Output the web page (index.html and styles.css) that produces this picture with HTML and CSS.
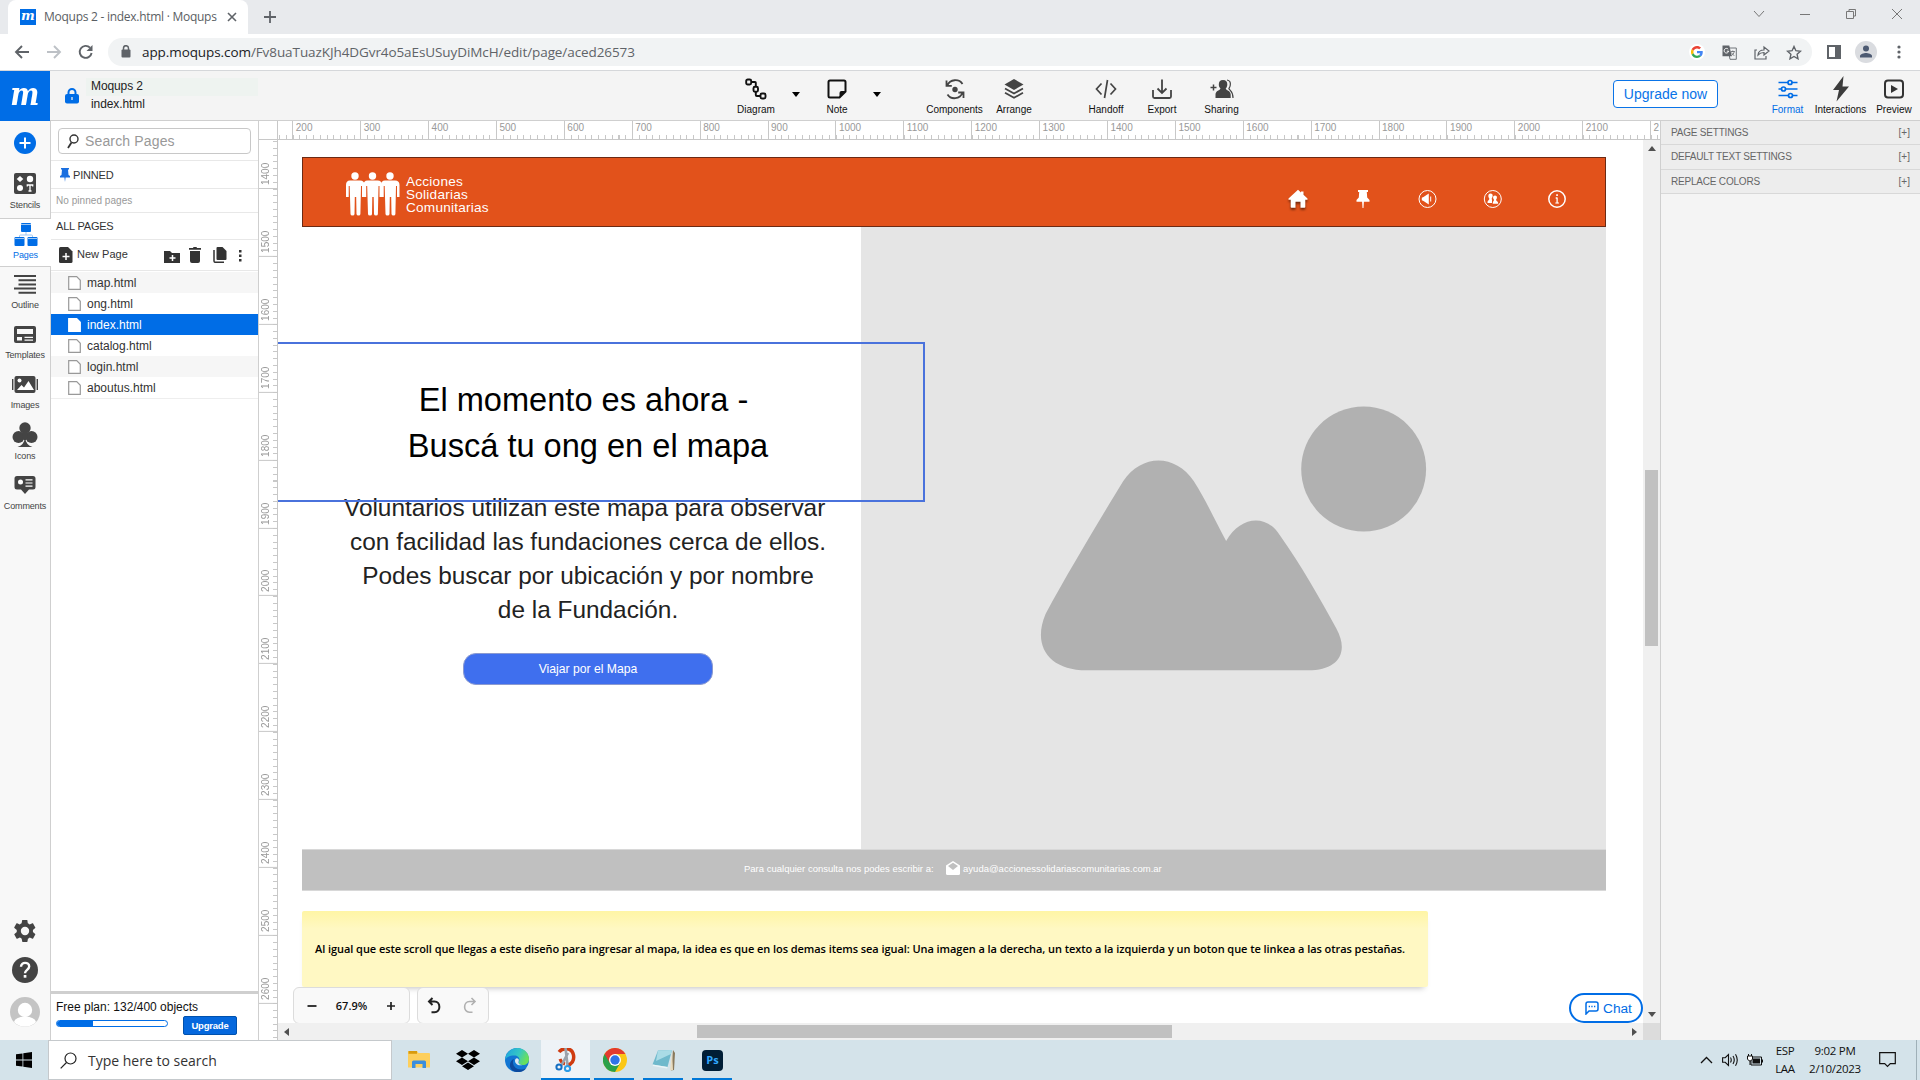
FILE: index.html
```html
<!DOCTYPE html>
<html lang="es">
<head>
<meta charset="utf-8">
<title>Moqups 2 - index.html · Moqups</title>
<link rel="stylesheet" href="styles.css">
</head>
<body>
<div class="tabstrip">
  <div class="tab">
    <span class="favicon">m</span>
    <span class="tab-title">Moqups 2 - index.html · Moqups</span>
    <svg class="tab-close" width="10" height="10" viewBox="0 0 10 10"><path d="M1 1l8 8M9 1l-8 8" stroke="#5f6368" stroke-width="1.6"/></svg>
  </div>
  <svg class="new-tab" width="14" height="14" viewBox="0 0 14 14"><path d="M7 1v12M1 7h12" stroke="#5f6368" stroke-width="1.8"/></svg>
  <div class="win-buttons">
    <svg width="12" height="12" viewBox="0 0 12 12"><path d="M1 3l5 5.500 5-5.500"/></svg>
    <svg width="12" height="12" viewBox="0 0 12 12"><path d="M1 6.500h10"/></svg>
    <svg width="12" height="12" viewBox="0 0 12 12"><path d="M1.500 3.500h7v7h-7zM4 3.500v-2h6.500v6.500h-2"/></svg>
    <svg width="12" height="12" viewBox="0 0 12 12"><path d="M1 1l10 10M11 1L1 11"/></svg>
  </div>
</div>
<div class="toolbar">
  <svg class="nav back" width="16" height="16" viewBox="0 0 16 16"><path d="M8 2L2 8l6 6M2 8h13" stroke="#5f6368"/></svg>
  <svg class="nav forward" width="16" height="16" viewBox="0 0 16 16"><path d="M8 2l6 6-6 6M14 8H1" stroke="#bdc1c6"/></svg>
  <svg class="nav reload" width="16" height="16" viewBox="0 0 16 16"><path d="M13.600 9A6 6 0 1 1 12 3.700" stroke="#5f6368"/><path d="M14.500 1v6h-6z" fill="#5f6368"/></svg>
  <div class="address">
    <svg class="lock" width="10" height="13" viewBox="0 0 10 13"><rect x="0.500" y="4.500" width="9" height="8" rx="1" fill="#5f6368"/><path d="M2.500 5V3.200a2.500 2.500 0 0 1 5 0V5" fill="none" stroke="#5f6368" stroke-width="1.500"/></svg>
    <span class="url"><b>app.moqups.com</b>/Fv8uaTuazKJh4DGvr4o5aEsUSuyDiMcH/edit/page/aced26573</span>
    <span class="google"><svg width="12" height="12" viewBox="0 0 48 48"><path fill="#ea4335" d="M24 9.500c3.500 0 6.700 1.200 9.200 3.600l6.900-6.900C35.900 2.400 30.500 0 24 0 14.600 0 6.500 5.400 2.600 13.200l8 6.200C12.400 13.700 17.700 9.500 24 9.500z"/><path fill="#4285f4" d="M47 24.600c0-1.600-.2-3.100-.4-4.600H24v9h12.900c-.6 3-2.300 5.500-4.800 7.200l7.700 6C44.400 38 47 31.800 47 24.600z"/><path fill="#fbbc05" d="M10.500 28.600a14.500 14.500 0 0 1 0-9.200l-8-6.200a24 24 0 0 0 0 21.600z"/><path fill="#34a853" d="M24 48c6.500 0 11.900-2.100 15.900-5.800l-7.700-6c-2.200 1.500-4.900 2.300-8.200 2.300-6.300 0-11.600-4.200-13.500-9.900l-8 6.200C6.500 42.600 14.600 48 24 48z"/></svg></span>
    <svg class="translate" width="15" height="15" viewBox="0 0 15 15"><path d="M6 3h8.300v11.300H8z" fill="#f1f3f4" stroke="#70757a"/><path d="M0.500 0.500h6.800l2.500 10.700H.5z" fill="#5f6368"/><path d="M6.200 4.200a2.300 2.300 0 1 0 .5 2H4.800" stroke="#fff" fill="none"/><path d="M8.800 6.500h4M10.800 5.500v1M12.200 6.500c-.3 2-1.400 3.300-2.800 4M9.600 7.500c.5 1.500 1.500 2.500 2.800 3" stroke="#5f6368" fill="none" stroke-width=".8"/></svg>
    <svg class="share" width="16" height="15" viewBox="0 0 16 15"><path d="M3 5H1v9h11v-3M4 10c.3-3.500 2.500-5 6-5V2l5 4-5 4V7.500c-3 0-4.500.8-6 2.500z" fill="none" stroke="#5f6368" stroke-width="1.200"/></svg>
    <svg class="star" width="16" height="15" viewBox="0 0 16 15"><path d="M8 1.500l1.900 4.200 4.600.5-3.400 3.100.9 4.500L8 11.500l-4 2.300.9-4.500L1.500 6.200l4.600-.5z" fill="none" stroke="#5f6368" stroke-width="1.400"/></svg>
  </div>
  <svg class="sidepanel" width="14" height="14" viewBox="0 0 14 14"><path d="M1 1h12v12H1z" fill="none" stroke="#5f6368" stroke-width="2"/><path d="M8 1h5v12H8z" fill="#5f6368"/></svg>
  <svg class="profile" width="22" height="22" viewBox="0 0 22 22"><circle cx="11" cy="11" r="11" fill="#dadce0"/><circle cx="11" cy="7.500" r="3" fill="#4d5a72"/><path d="M5 16.500v-1.500c0-2 4-3 6-3s6 1 6 3v1.500z" fill="#4d5a72"/></svg>
  <svg class="kebab" width="4" height="14" viewBox="0 0 4 14"><g fill="#5f6368"><circle cx="2" cy="2" r="1.600"/><circle cx="2" cy="7" r="1.600"/><circle cx="2" cy="12" r="1.600"/></g></svg>
</div>
<header class="appbar">
  <div class="logo"><span>m</span></div>
  <svg class="doc-lock" width="14" height="16" viewBox="0 0 14 16"><rect x="0" y="6" width="14" height="9.500" rx="2" fill="#006de6"/><path d="M3.500 7V4.500a3.500 3.500 0 0 1 7 0V7" fill="none" stroke="#006de6" stroke-width="2"/><path d="M7 9v3" stroke="#cde" stroke-width="1.500"/></svg>
  <div class="doc"><div class="doc-name">Moqups 2</div><div class="doc-page">index.html</div></div>

  <div class="tool t-diagram"><svg width="22" height="22" viewBox="0 0 22 22"><g fill="none" stroke="#111" stroke-width="1.900"><rect x="1.200" y="1.500" width="5" height="5" rx="1.500"/><rect x="8.500" y="8.800" width="4.500" height="5" rx="1.500"/><rect x="15.500" y="15.500" width="5" height="5" rx="1.500"/><path d="M6.200 4H10q.8 0 .8.800v4M10.800 13.800V17q0 1 1 1h3.700"/></g></svg><span>Diagram</span></div>
  <i class="caret"></i>
  <div class="tool t-note"><svg width="22" height="22" viewBox="0 0 22 22"><path d="M4 2.500h14q1.500 0 1.500 1.500v9.500l-6 6H4q-1.500 0-1.500-1.500V4q0-1.500 1.500-1.500z" fill="none" stroke="#111" stroke-width="2"/><path d="M19.500 13h-4q-2 0-2 2v4.500z" fill="#111"/></svg><span>Note</span></div>
  <i class="caret"></i>
  <div class="tool t-components"><svg width="22" height="22" viewBox="0 0 22 22"><circle cx="11" cy="11.500" r="2.700" fill="#444"/><g fill="none" stroke="#444" stroke-width="1.800"><path d="M3.300 7.500C6 1 15 .5 18.500 6M2.500 2.500v5.300h5.300M18.700 14.500C16 21.500 7 22 3.500 16.500M19.500 20v-5.500h-5.300"/></g></svg><span>Components</span></div>
  <div class="tool t-arrange"><svg width="22" height="22" viewBox="0 0 22 22"><path d="M11 1l9.500 5.500L11 12 1.500 6.500z" fill="#444"/><path d="M2 10.500l9 5 9-5M2 14.800l9 5 9-5" fill="none" stroke="#444" stroke-width="1.800"/></svg><span>Arrange</span></div>
  <div class="tool t-handoff"><svg width="22" height="22" viewBox="0 0 22 22"><path d="M6.500 5.500L1.500 11l5 5.500M15.500 5.500l5 5.500-5 5.500M12.500 2l-3 18" fill="none" stroke="#444" stroke-width="1.700"/></svg><span>Handoff</span></div>
  <div class="tool t-export"><svg width="22" height="22" viewBox="0 0 22 22"><path d="M2 12v6.500q0 1.500 1.500 1.500h15q1.500 0 1.500-1.500V12M11 1.500V15M6.500 10.500L11 15l4.500-4.500" fill="none" stroke="#444" stroke-width="1.800"/></svg><span>Export</span></div>
  <div class="tool t-sharing"><svg width="24" height="22" viewBox="0 0 24 22"><path d="M3.500 6.500v6M.5 9.500h6" stroke="#444" stroke-width="1.500"/><path d="M13 2c3 0 4.500 2 4.300 4.800-.1 2-.8 3-1.600 3.800.2 1.800 5 2 5 6V20H5.500v-3.400c0-4 4.700-4.200 5-6-.9-.9-1.600-1.800-1.700-3.800C8.700 4 10 2 13 2z" fill="#444"/><path d="M17 2c3 .5 3.600 3 3.300 5-.2 2-.8 2.600-1.400 3.500 1 2.500 4.100 2.500 4.100 9.500" fill="none" stroke="#444" stroke-width="1.200"/></svg><span>Sharing</span></div>
  <button class="upgrade-now">Upgrade now</button>
  <div class="tool t-format"><svg width="20" height="20" viewBox="0 0 20 20"><g stroke="#006de6" stroke-width="1.700" fill="#f4f4f4"><path d="M.5 3.500h19M.5 10h19M.5 16.500h19"/><circle cx="12" cy="3.500" r="2"/><circle cx="5.500" cy="10" r="2"/><circle cx="12.500" cy="16.500" r="2"/></g></svg><span>Format</span></div>
  <div class="tool t-inter"><svg width="18" height="26" viewBox="0 0 18 26"><path d="M11.500 0L1 14h6L4.500 25.500 17 10.500h-6.500z" fill="#3c3c3c"/></svg><span>Interactions</span></div>
  <div class="tool t-preview"><svg width="20" height="20" viewBox="0 0 20 20"><rect x="1" y="1.500" width="18" height="17" rx="3" fill="none" stroke="#333" stroke-width="2"/><path d="M7 6l7 4-7 4z" fill="#333"/></svg><span>Preview</span></div>
</header>

<main class="main">
  <nav class="rail">
    <svg class="add" width="22" height="22" viewBox="0 0 22 22"><circle cx="11" cy="11" r="11" fill="#006de6"/><path d="M11 5.500v11M5.500 11h11" stroke="#fff" stroke-width="2"/></svg>
    <div class="rail-item"><svg width="24" height="22" viewBox="0 0 24 22"><rect x="1" width="22" height="21" rx="2" fill="#444"/><path d="M7 3l3.300 3L7 9 3.700 6z" fill="#fff"/><circle cx="17" cy="6" r="3.200" fill="#fff"/><circle cx="7" cy="15" r="3" fill="#fff"/><path d="M14.300 13.500V12h5.400v1.500M17 12v6M15.500 18h3" fill="none" stroke="#fff" stroke-width="1.300"/></svg><span>Stencils</span></div>
    <div class="rail-item active"><svg width="24" height="24" viewBox="0 0 24 24"><g fill="#006de6"><rect x="7" y="0" width="10" height="9" rx="1"/><rect x="0.500" y="14" width="10" height="9" rx="1"/><rect x="13.500" y="14" width="10" height="9" rx="1"/></g><path d="M5.500 14v-1q0-1 1-1h11q1 0 1 1v1M12 9v3M7 1.500h10M1 15.500h9M14 15.500h9" stroke="#9cc6f3" fill="none"/></svg><span>Pages</span></div>
    <div class="rail-item"><svg width="24" height="22" viewBox="0 0 24 22"><path d="M1 3h22M5.500 7.200H23M5.500 11.400H23M1 15.600h22M5.500 19.800H23" stroke="#444" stroke-width="2"/></svg><span>Outline</span></div>
    <div class="rail-item"><svg width="24" height="22" viewBox="0 0 24 22"><rect x="1" y="3" width="22" height="17" rx="2" fill="#444"/><path d="M4 6h16v5H4zM4 14h5v3.500H4zM11.500 13.800H20v1.300h-8.500zM11.500 16.500H20v1.300h-8.500z" fill="#f8f8f8"/></svg><span>Templates</span></div>
    <div class="rail-item"><svg width="26" height="22" viewBox="0 0 26 22"><rect x="2.500" y="3" width="21" height="17" rx="2" fill="#444"/><path d="M.7 6v11M25.300 6v11" stroke="#444" stroke-width="1.400"/><circle cx="7.500" cy="7.500" r="2" fill="#fff"/><path d="M5 17l4.500-5 2.500 2.500L16.500 8l5.500 9z" fill="#fff"/></svg><span>Images</span></div>
    <div class="rail-item"><svg width="26" height="26" viewBox="0 0 26 26"><g fill="#444"><circle cx="13" cy="6" r="5.700"/><circle cx="6.500" cy="15" r="6"/><circle cx="19.500" cy="15" r="6"/><path d="M11 10h4l1 6-3 3-3-3zM13 16q1 7 7.500 9h-15Q12 23 13 16z"/></g></svg><span>Icons</span></div>
    <div class="rail-item"><svg width="24" height="22" viewBox="0 0 24 22"><path d="M4 2h16q2.500 0 2.500 2.500v8.500q0 2.500-2.500 2.500h-4L12 20l-4-4.500H4Q1.500 15.500 1.500 13V4.500Q1.500 2 4 2z" fill="#444"/><circle cx="7.500" cy="8" r="2.500" fill="#fff"/><path d="M12.500 5.800h7M12.500 9h7M12.500 12.200h7" stroke="#fff" stroke-width="1.200"/></svg><span>Comments</span></div>
    <div class="rail-bottom">
      <svg width="24" height="24" viewBox="0 0 24 24"><path fill="#444" d="M19.900 13.100a8 8 0 0 0 0-2.200l2.300-1.800c.2-.2.300-.5.100-.7l-2.200-3.900c-.1-.2-.4-.3-.7-.2l-2.800 1.100a8 8 0 0 0-1.800-1.100L14.400 1.400c0-.3-.3-.4-.5-.4H9.600c-.3 0-.5.200-.5.400l-.5 2.900c-.7.300-1.200.6-1.800 1.100L4.100 4.300c-.3-.1-.5 0-.7.200L1.300 8.300c-.2.300-.1.600.1.800l2.400 1.800a9 9 0 0 0 0 2.200l-2.300 1.800c-.3.200-.3.500-.2.700l2.200 3.900c.1.200.4.300.7.200l2.700-1.100c.6.400 1.200.8 1.800 1.100l.5 2.900c0 .2.200.4.500.4h4.300c.2 0 .4-.2.500-.4l.4-2.900c.7-.3 1.300-.6 1.800-1.100l2.800 1.100c.2.100.5 0 .6-.2l2.200-3.900c.1-.2.100-.5-.1-.7zM12 16.200a4.200 4.200 0 1 1 0-8.400 4.200 4.200 0 0 1 0 8.400z"/></svg>
      <svg width="26" height="26" viewBox="0 0 26 26"><circle cx="13" cy="13" r="13" fill="#444"/><path d="M9 9.800c0-5.400 8.200-5 8.200-.3 0 3-4.200 3.700-4.200 6.700" fill="none" stroke="#fff" stroke-width="2.400"/><rect x="11.700" y="18" width="2.700" height="2.700" fill="#fff"/></svg>
      <svg width="30" height="30" viewBox="0 0 30 30"><circle cx="15" cy="15" r="15" fill="#c4c4c4"/><circle cx="15" cy="13" r="7.200" fill="#fff"/><path d="M4 25q1-5 11-5.500Q25 20 26 25A15 15 0 0 1 4 25z" fill="#fff"/></svg>
    </div>
  </nav>

  <aside class="pages">
    <div class="search"><svg width="13" height="15" viewBox="0 0 13 15"><circle cx="7" cy="5" r="4" fill="none" stroke="#333" stroke-width="1.400"/><path d="M4.500 8.500L1 14" stroke="#333" stroke-width="1.800"/></svg><span>Search Pages</span></div>
    <div class="sec sec-pinned"><svg width="10" height="14" viewBox="0 0 10 14"><path d="M1 0h8v1.500H8L8.500 7 10 8v1.500H5.600L5 14l-.6-4.500H0V8l1.500-1L2 1.500H1z" fill="#1a6fe0"/></svg><span>PINNED</span></div>
    <div class="sec sec-none"><span>No pinned pages</span></div>
    <div class="sec sec-all"><span>ALL PAGES</span></div>
    <div class="page-tools">
      <svg width="14" height="16" viewBox="0 0 14 16"><path d="M1.500 0H9l4.500 4.500V14.500q0 1.500-1.500 1.500H1.500Q0 16 0 14.500v-13Q0 0 1.500 0z" fill="#333"/><path d="M7 6v7M3.500 9.500h7" stroke="#fff" stroke-width="1.500"/></svg>
      <span class="new-page">New Page</span>
      <svg class="pt-folder" width="16" height="12" viewBox="0 0 16 12"><path d="M0 0h6l2 2h8v10H0z" fill="#333"/><path d="M8.500 4v6M5.500 7h6" stroke="#fff" stroke-width="1.500"/></svg>
      <svg class="pt-trash" width="12" height="16" viewBox="0 0 12 16"><path d="M0 1h4l.5-1h3L8 1h4v1.700H0zM1 4h10v10q0 2-2 2H3q-2 0-2-2z" fill="#333"/></svg>
      <svg class="pt-copy" width="14" height="16" viewBox="0 0 14 16"><path d="M4.500 0H9.500L13.500 4v8q0 1-1 1h-8q-1 0-1-1V1q0-1 1-1z" fill="#333"/><path d="M1 3v11q0 1.300 1.300 1.300H11" fill="none" stroke="#333" stroke-width="1.500"/></svg>
      <svg class="pt-more" width="3" height="12" viewBox="0 0 3 12"><path d="M0 0h2.500v2.500H0zM0 4.500h2.500V7H0zM0 9h2.500v2.500H0z" fill="#333"/></svg>
    </div>
    <ul class="files">
      <li><svg width="13" height="14" viewBox="0 0 13 14"><path d="M.7.700h8l3.600 3.600v9H.7z"/></svg>map.html</li>
      <li><svg width="13" height="14" viewBox="0 0 13 14"><path d="M.7.700h8l3.600 3.600v9H.7z"/></svg>ong.html</li>
      <li class="current"><svg width="13" height="14" viewBox="0 0 13 14"><path d="M.7.700h8l3.600 3.600v9H.7z"/></svg>index.html</li>
      <li><svg width="13" height="14" viewBox="0 0 13 14"><path d="M.7.700h8l3.600 3.600v9H.7z"/></svg>catalog.html</li>
      <li><svg width="13" height="14" viewBox="0 0 13 14"><path d="M.7.700h8l3.600 3.600v9H.7z"/></svg>login.html</li>
      <li><svg width="13" height="14" viewBox="0 0 13 14"><path d="M.7.700h8l3.600 3.600v9H.7z"/></svg>aboutus.html</li>
    </ul>
    <div class="plan">
      <div class="plan-text">Free plan: 132/400 objects</div>
      <div class="plan-row"><div class="meter"><i style="width:33%"></i></div><button class="upgrade">Upgrade</button></div>
    </div>
  </aside>

  <section class="editor">
    <div class="hruler"><div class="corner"></div><div class="htrack"><div class="hticks"></div><b class="lead"></b><b>200</b><b>300</b><b>400</b><b>500</b><b>600</b><b>700</b><b>800</b><b>900</b><b>1000</b><b>1100</b><b>1200</b><b>1300</b><b>1400</b><b>1500</b><b>1600</b><b>1700</b><b>1800</b><b>1900</b><b>2000</b><b>2100</b><b>2</b></div></div>
    <div class="editor-body">
      <div class="vruler"><div class="vticks"></div><b class="lead">1400</b><b>1500</b><b>1600</b><b>1700</b><b>1800</b><b>1900</b><b>2000</b><b>2100</b><b>2200</b><b>2300</b><b>2400</b><b>2500</b><b>2600</b></div>
      <div class="viewport">
        <div class="stage">
          <div class="art-header">
            <svg class="people" width="54" height="44" viewBox="0 0 54 44"><defs><g id="man"><circle cx="9.500" cy="4" r="3.700"/><path d="M4.500 8.500h10q4.500 0 4.500 4.500v12h-2.500V14h-1l-.6 28q0 1.500-1.900 1.500t-2-1.500l-.3-17h-1.400L9 42q0 1.500-2 1.500T5 42L4.200 14h-1v11H.500V13q0-4.500 4-4.500z"/></g></defs><g fill="#fff"><use href="#man" x="-0.500"/><use href="#man" x="17"/><use href="#man" x="34.500"/></g></svg>
            <div class="brand"><span>Acciones</span><span>Solidarias</span><span>Comunitarias</span></div>
            <div class="art-nav">
              <svg class="home" width="20" height="20" viewBox="0 0 20 20"><path d="M10 .8l3 2.700V2.500h2.500v3.200l4 3.800v1.200h-2.200V18q0 .8-.8.800h-4v-6h-5v6h-4q-.8 0-.8-.8v-7.300H.5V9.500z" fill="#fff"/></svg>
              <svg width="20" height="20" viewBox="0 0 20 20"><path d="M5 1h10v2h-1.200l.4 5.500L16.500 11v1.700h-5.600L10.500 19h-1l-.4-6.300H3.500V11l2.300-2.500L6.200 3H5z" fill="#fff"/></svg>
              <svg width="20" height="20" viewBox="0 0 20 20"><circle cx="10.500" cy="10" r="8.500" fill="none" stroke="#fff" stroke-width="1"/><path d="M4.800 8.800L6.500 8 11.800 4.500v11L6.500 12l-1.700-.8z" fill="#fff"/><path d="M13.700 7.500v5" stroke="#fff" stroke-width="1"/></svg>
              <svg width="20" height="20" viewBox="0 0 20 20"><circle cx="10.800" cy="10" r="8.500" fill="none" stroke="#fff" stroke-width="1"/><path d="M8.500 4.500c3 0 2.500 3.500 1.200 5l.3 1.500v3H5.500c0-3 1.800-2.500 1.800-4.500C6 8 5.800 4.500 8.500 4.500zM13 6.500c2.500 0 2.300 3 1 4.300.2 1.500 2.200 1.200 2.200 3.900h-5.500c0-2.500 1.300-2.700 1.400-4-1.300-1.200-1.600-4.200.9-4.200z" fill="#fff"/></svg>
              <svg width="20" height="20" viewBox="0 0 20 20"><circle cx="10" cy="10" r="8.200" fill="none" stroke="#fff" stroke-width="1.500"/><path d="M9.200 5.300h1.700V7H9.200zM8.300 13.500h3.700v1H8.300z" fill="#fff"/><path d="M10.100 8.500v5.700M8.700 9h1.400" stroke="#fff" stroke-width="1.300"/></svg>
            </div>
          </div>
          <div class="art-image"><svg width="745" height="622" viewBox="0 0 608 508"><circle cx="410.300" cy="197.700" r="51" fill="#b1b1b1"/><path d="M214 207.500C229 185 256.500 185 271.500 207.500C281.500 223 289.500 241 298 256.500C309.500 236 331 234 342 252C359 276 375 304 388 328C399 348 389 362 365 362H184C153 362 139.500 342 150.500 316C169.500 281 194 240 214 207.500z" fill="#b1b1b1"/></svg></div>
          <div class="art-text">Voluntarios utilizan este mapa para observar 
con facilidad las fundaciones cerca de ellos.
Podes buscar por ubicación y por nombre
de la Fundación.</div>
          <div class="art-title">El momento es ahora - 
Buscá tu ong en el mapa</div>
          <div class="art-button">Viajar por el Mapa</div>
          <div class="selection"></div>
          <div class="art-footer"><span>Para cualquier consulta nos podes escribir a:</span><svg width="14" height="14" viewBox="0 0 14 14"><path d="M7 0l7 4.500V12.500q0 1.500-1.500 1.500h-11Q0 14 0 12.500v-8z" fill="#fff"/><path d="M2 5l5-3.300L12 5 7 9z" fill="#c0c0c0"/></svg><span>ayuda@accionessolidariascomunitarias.com.ar</span></div>
          <div class="art-note">Al igual que este scroll que llegas a este diseño para ingresar al mapa, la idea es que en los demas items sea igual: Una imagen a la derecha, un texto a la izquierda y un boton que te linkea a las otras pestañas.</div>
          <div class="zoombar">
            <svg width="10" height="10" viewBox="0 0 10 10"><path d="M.5 5h9" stroke="#222" stroke-width="1.800"/></svg>
            <span>67.9%</span>
            <svg width="10" height="10" viewBox="0 0 10 10"><path d="M1 5h8M5 1v8" stroke="#222" stroke-width="1.700"/></svg>
          </div>
          <div class="undobar">
            <svg width="14" height="17" viewBox="0 0 14 17"><path d="M2 4.500h5.500c6.500 0 6.500 10.800 0 10.800H4.500M5.500 1L2 4.500 5.500 8" fill="none" stroke="#222" stroke-width="2"/></svg>
            <svg width="14" height="17" viewBox="0 0 14 17"><path d="M12 4.500H6.500c-6.500 0-6.500 10.800 0 10.800H9.500M8.500 1L12 4.500 8.500 8" fill="none" stroke="#b0b0b0" stroke-width="1.600"/></svg>
          </div>
          <div class="chat"><svg width="14" height="14" viewBox="0 0 14 14"><path d="M1 13V3q0-2 2-2h8q2 0 2 2v5q0 2-2 2H4z" fill="none" stroke="#006de6" stroke-width="1.500"/><path d="M3.700 5.500h1.300M6.300 5.500h1.300M9 5.500h1.300" stroke="#006de6" stroke-width="1.300"/></svg>Chat</div>
        </div>
        <div class="hscroll"><svg width="5" height="8" viewBox="0 0 5 8"><path d="M5 0v8L0 4z" fill="#505050"/></svg><i></i><svg width="5" height="8" viewBox="0 0 5 8"><path d="M0 0v8l5-4z" fill="#505050"/></svg></div>
      </div>
      <div class="vscroll"><svg width="8" height="5" viewBox="0 0 8 5"><path d="M0 5h8L4 0z" fill="#505050"/></svg><i></i><svg width="8" height="5" viewBox="0 0 8 5"><path d="M0 0h8L4 5z" fill="#505050"/></svg><div class="scroll-corner"></div></div>
    </div>
  </section>

  <aside class="settings">
    <div><span>PAGE SETTINGS</span><em>[+]</em></div>
    <div><span>DEFAULT TEXT SETTINGS</span><em>[+]</em></div>
    <div><span>REPLACE COLORS</span><em>[+]</em></div>
  </aside>
</main>

<footer class="taskbar">
  <div class="start"><svg width="16" height="16" viewBox="0 0 16 16"><path d="M0 2.300L6.500 1.400V7.600H0zM7.300 1.300L16 0v7.600H7.300zM0 8.400h6.500v6.200L0 13.700zM7.300 8.400H16V16l-8.700-1.300z" fill="#000"/></svg></div>
  <div class="winsearch"><svg width="17" height="17" viewBox="0 0 17 17"><circle cx="10.500" cy="6.500" r="5.500" fill="none" stroke="#222" stroke-width="1.200"/><path d="M6.500 10.500L.7 16.300" stroke="#222" stroke-width="1.200"/></svg><span>Type here to search</span></div>
  <div class="apps">
    <div class="app"><svg width="22" height="20" viewBox="0 0 22 20"><path d="M0 2q0-1 1-1h8l1.500 2H21q1 0 1 1v13.500H0z" fill="#fdcf5c"/><path d="M.5 1h8.500v2.800H.5z" fill="#d89b0d"/><path d="M4 18v-6q0-1.500 1.500-1.500h11Q18 10.500 18 12v6h-3.500v-4h-7v4z" fill="#3a8ede"/></svg></div>
    <div class="app"><svg width="24" height="20" viewBox="0 0 24 20"><path d="M6 0l6 3.700-6 3.800L0 3.700zM18 0l6 3.700-6 3.800-6-3.800zM6 7.500l6 3.800L6 15l-6-3.700zM18 7.500l6 3.800-6 3.700-6-3.700zM12 12.500l6 3.700-6 3.800-6-3.800z" fill="#000"/></svg></div>
    <div class="app"><svg width="24" height="24" viewBox="0 0 24 24"><defs><linearGradient id="eg" x1="0" x2="1" y1="0" y2=".4"><stop offset="0" stop-color="#1ba1e2"/><stop offset=".6" stop-color="#35c7c4"/><stop offset="1" stop-color="#69e05c"/></linearGradient></defs><circle cx="12" cy="12" r="12" fill="#1276d3"/><path d="M.3 10C1.500 3.500 7 0 12.500 0 19 0 24 5 24 11c0 4-3 6-6 6-3.500 0-5.500-1.500-4-3.500 1.500-3-1-6-4.500-6C5 7.500 1.500 9 .3 12z" fill="url(#eg)"/><path d="M9 11c-3 5 1 11 8 10.500 2-.2 4-1 5-2.500-3 5.500-10 6.500-14.500 3.500C3 19 5 12 9 11z" fill="#0c4a9e"/><path d="M10.500 11c-1.800 3 1.500 7.500 7 6-2 0-5-1-3.700-4 .7-2-2-3.800-3.300-2z" fill="#dceaf1"/></svg></div>
    <div class="app on focused"><svg width="22" height="24" viewBox="0 0 22 24"><path d="M4 4C8-1 17-.5 18.500 7c1 6-2 9.500-6 10" fill="none" stroke="#cf3b10" stroke-width="3.500"/><path d="M5 11c1 3 3 4.500 5 5" fill="none" stroke="#cf3b10" stroke-width="3"/><path d="M10.500 0l2 17M13 5L6 18" stroke="#9aa2ab" stroke-width="2.600"/><circle cx="4" cy="19" r="2.600" fill="none" stroke="#156fc2" stroke-width="2"/><circle cx="12.500" cy="20.500" r="2.600" fill="none" stroke="#2a9be6" stroke-width="2"/></svg></div>
    <div class="app on"><svg width="24" height="24" viewBox="0 0 24 24"><circle cx="12" cy="12" r="12" fill="#fbc716"/><path d="M12 12L1.600 6A12 12 0 0 0 12 24l5.200-9z" fill="#2aa14b"/><path d="M12 6h10.400A12 12 0 0 0 1.600 6l5.200 9L12 12z" fill="#e33b2e"/><circle cx="12" cy="12" r="6" fill="#fff"/><circle cx="12" cy="12" r="4.700" fill="#2f73e8"/></svg></div>
    <div class="app on"><svg width="24" height="22" viewBox="0 0 24 22"><path d="M21 1l2 3-1 17-3 .5z" fill="#8a7a5c"/><path d="M20 2l-2 19.500 3-.5z" fill="#e8dcc0"/><path d="M6 1.500l14-.5-4.500 17L.5 15.500z" fill="#6fb9cc"/><path d="M6 1.500l14-.5-1 4L4 12z" fill="#a9dbe6"/><path d="M.5 15.500l15 2.500-.5 1.500L1 17z" fill="#e9f4f7"/></svg></div>
    <div class="app on"><span class="ps">Ps</span></div>
  </div>
  <div class="tray">
    <svg class="tr-up" width="13" height="8" viewBox="0 0 13 8"><path d="M1 7l5.500-5.500L12 7" fill="none" stroke="#111" stroke-width="1.300"/></svg>
    <svg class="tr-vol" width="17" height="14" viewBox="0 0 17 14"><path d="M.6 4.700h2.600L6.500 1.500v11L3.200 9.300H.6zM8.500 4.500q1.500 2.500 0 5M11 3q2.500 4 0 8M13.500 1.200q3.500 5.800 0 11.600" fill="none" stroke="#111" stroke-width="1.100"/></svg>
    <svg class="tr-bat" width="16" height="12" viewBox="0 0 16 12"><path d="M4 3h10.500v8H4z" fill="none" stroke="#111"/><path d="M5.500 4.500h7.500v5H5.500zM14.500 5.500H16v3h-1.500z" fill="#111"/><path d="M.5 2h5v3q-1 2-2.500 2T.5 5zM1.500 0v2M4.500 0v2M3 7v4" fill="#fff" stroke="#111"/></svg>
    <div class="lang"><span>ESP</span><span>LAA</span></div>
    <div class="clock"><span>9:02 PM</span><span>2/10/2023</span></div>
    <svg class="tr-note" width="17" height="16" viewBox="0 0 17 16"><path d="M.7.700h15.600v11h-5L8.500 14.500 5.700 11.700h-5z" fill="none" stroke="#111" stroke-width="1.200"/></svg>
    <i class="peek"></i>
  </div>
</footer>
</body>
</html>
```
FILE: styles.css
```css
* { box-sizing: border-box; }
body { margin: 0; width: 1920px; height: 1080px; overflow: hidden; display: flex; flex-direction: column; font-family: "Liberation Sans", Arial, sans-serif; font-size: 12px; color: #222; background: #fff; }
svg { display: block; flex: none; }
button { font-family: inherit; padding: 0; margin: 0; }

/* browser chrome */
.tabstrip { height: 34px; background: #e8eaed; display: flex; align-items: flex-start; flex: none; }
.tab { width: 240px; height: 34px; margin-left: 8px; background: #fff; border-radius: 8px 8px 0 0; display: flex; align-items: center; padding-left: 12px; }
.favicon { width: 16px; height: 16px; background: #006de6; color: #fff; font: italic bold 13px/14px "DejaVu Serif", serif; text-align: center; flex: none; }
.tab-title { font: 12px/16px "Open Sans", sans-serif; color: #5a5e63; margin-left: 8px; white-space: nowrap; width: 173px; letter-spacing: -0.27px; }
.tab-close { margin-left: 10px; }
.new-tab { margin: 10px 0 0 15px; }
.win-buttons { margin: 8px 17px 0 auto; display: flex; gap: 34px; }
.win-buttons path { fill: none; stroke: #777; stroke-width: 1; }
.toolbar { height: 37px; border-bottom: 1px solid #d5d7da; background: #fff; display: flex; align-items: center; flex: none; }
.nav { fill: none; stroke-width: 1.9; }
.back { margin-left: 14px; }
.forward { margin-left: 16px; }
.reload { margin-left: 16px; }
.address { width: 1704px; height: 28px; margin-left: 14px; border-radius: 14px; background: #f1f3f4; display: flex; align-items: center; }
.lock { margin-left: 13px; margin-top: -2px; }
.url { font: 13.5px/20px "Open Sans", sans-serif; color: #5f6368; margin-left: 11px; white-space: nowrap; letter-spacing: -0.085px; }
.url b { font-weight: 400; color: #202124; }
.google { width: 16px; height: 16px; border-radius: 8px; background: #fff; display: grid; place-items: center; margin-left: auto; }
.translate { margin-left: 17px; }
.share { margin-left: 17px; }
.star { margin-left: 16px; margin-right: 10px; }
.sidepanel { margin-left: 15px; }
.profile { margin-left: 14px; }
.kebab { margin-left: 20px; }

/* application header */
.appbar { height: 50px; background: #f4f4f4; border-bottom: 1px solid #cfcfcf; display: flex; align-items: flex-start; flex: none; }
.logo { width: 50px; height: 50px; background: #006de6; display: grid; place-items: center; color: #fff; font: italic bold 32px/40px "DejaVu Serif", serif; flex: none; }
.logo span { transform: scaleX(.86); margin-top: -5px; }
.doc-lock { margin: 17px 7px 0 15px; }
.doc { width: 172px; margin-top: 7px; flex: none; }
.doc-name, .doc-page { height: 18px; line-height: 16px; padding-left: 5px; letter-spacing: -.1px; }
.doc-name { background: #eef3f0; }
.tool { width: 56px; height: 49px; display: flex; flex-direction: column; align-items: center; justify-content: space-between; padding: 2px 0 4px; font-size: 10px; line-height: 12px; color: #111; white-space: nowrap; flex: none; }
.tool svg { margin: auto 0; }
.t-diagram { margin-left: 470px; }
.caret { border: 4px solid transparent; border-top: 5px solid #000; border-bottom: 0; margin: 21px 8px 0; flex: none; }
.t-note { margin-left: 1px; }
.t-components { margin-left: 37.5px; }
.t-arrange { margin-left: 3.5px; }
.t-handoff { margin-left: 36px; }
.t-sharing { margin-left: 3.5px; }
.upgrade-now { width: 105px; height: 28px; margin: 9px 0 0 363.5px; border: 1px solid #0a74e8; border-radius: 4px; background: #fff; color: #0a74e8; font-size: 14px; line-height: 26px; flex: none; }
.t-format { margin-left: 41.5px; color: #006de6; }
.t-inter { width: 50px; }
.t-preview { width: 54px; margin-left: 1.5px; margin-right: -2px; }

/* workspace */
.main { height: 919px; display: flex; flex: none; }
.rail { width: 51px; background: #f8f8f8; border-right: 1px solid #cfcfcf; display: flex; flex-direction: column; align-items: center; flex: none; }
.add { margin: 11px 0 14px; }
.rail-item { width: 50px; height: 50px; display: flex; flex-direction: column; align-items: center; font-size: 9px; line-height: 10px; color: #444; padding-bottom: 8px; flex: none; white-space: nowrap; letter-spacing: -.15px; }
.rail-item:nth-last-child(-n+3) { padding-bottom: 7px; }
.rail-item svg { margin: auto 0; }
.rail-item.active { width: 51px; margin-right: -1px; height: 49px; margin-bottom: 1px; background: #fff; border-top: 1px solid #cfcfcf; border-bottom: 1px solid #cfcfcf; color: #006de6; padding-bottom: 6px; }
.rail-bottom { margin-top: auto; display: flex; flex-direction: column; align-items: center; padding-bottom: 13px; gap: 14px; }

.pages { width: 208px; border-right: 1px solid #cfcfcf; background: #fff; display: flex; flex-direction: column; flex: none; }
.search { width: 193px; height: 26px; margin: 7px 0 6px 7px; border: 1px solid #c8c8c8; border-radius: 4px; display: flex; align-items: center; padding-left: 8px; gap: 5px; font-size: 14px; letter-spacing: .15px; color: #999; flex: none; }
.sec { border-top: 1px solid #e8e8e8; display: flex; align-items: center; padding-left: 5px; flex: none; white-space: nowrap; }
.sec-pinned { height: 28px; padding-left: 9px; gap: 3px; font-size: 11px; letter-spacing: -.18px; color: #333; }
.sec-none { height: 24px; font-size: 10px; color: #999; letter-spacing: .05px; }
.sec-all { height: 27px; font-size: 11px; letter-spacing: -.2px; color: #333; }
.page-tools { height: 32px; border-top: 1px solid #e8e8e8; border-bottom: 1px solid #e8e8e8; display: flex; align-items: center; padding: 0 0 1px 8px; flex: none; }
.new-page { margin: -2px 0 0 4px; width: 58px; font-size: 11px; color: #333; }
.pt-folder { margin: 5px 0 0 29px; }
.pt-trash { margin-left: 9px; }
.pt-copy { margin-left: 12px; }
.pt-more { margin: 2px 0 0 12px; }
.files { list-style: none; margin: 1px 0 0; padding: 0; border-bottom: 1px solid #eee; }
.files li { height: 21px; display: flex; align-items: center; gap: 6px; padding-left: 17px; font-size: 12px; color: #333; }
.files li:nth-child(odd) { background: #f6f6f6; }
.files path { fill: #fff; stroke: #999; stroke-width: 1.2; }
.files li.current { background: #006de6; color: #fff; }
.files .current path { stroke: #fff; }
.plan { margin-top: auto; height: 49px; border-top: 3px solid #cfcfcf; padding: 5px 0 0 5px; color: #111; }
.plan-text { line-height: 16px; }
.plan-row { display: flex; align-items: flex-start; }
.meter { width: 112px; height: 7px; margin-top: 5px; border: 1px solid #006de6; border-radius: 4px; overflow: hidden; }
.meter i { display: block; height: 100%; background: #006de6; }
.upgrade { width: 54px; height: 19px; margin: 1px 0 0 15px; border: 1px solid #0051ad; border-radius: 2px; background: #0568dd; color: #fff; font-size: 9.5px; font-weight: bold; line-height: 17px; letter-spacing: -.2px; }

/* editor */
.editor { width: 1401px; display: flex; flex-direction: column; flex: none; }
.hruler { height: 19px; display: flex; border-bottom: 1px solid #c8c8c8; flex: none; }
.corner { width: 19px; border-right: 1px solid #c8c8c8; flex: none; }
.htrack { width: 1382px; display: flex; overflow: hidden; position: relative; }
.hticks { position: absolute; left: 1.2px; right: 0; bottom: 0; height: 4px; background: repeating-linear-gradient(90deg, #c8c8c8 0 1px, transparent 1px 6.79px); }
.hruler b { width: 67.9px; flex: none; border-left: 1px solid #c8c8c8; padding-left: 2.5px; font: 10px/13px "Liberation Sans", sans-serif; color: #999; }
.hruler .lead { width: 14.3px; border: 0; }
.editor-body { display: flex; height: 900px; }
.vruler { width: 19px; border-right: 1px solid #c8c8c8; display: flex; flex-direction: column; overflow: hidden; position: relative; flex: none; }
.vticks { position: absolute; top: 1.3px; bottom: 0; right: 0; width: 4px; background: repeating-linear-gradient(180deg, #c8c8c8 0 1px, transparent 1px 6.79px); }
.vruler b { height: 67.9px; flex: none; writing-mode: vertical-rl; font: 10px/13px "Liberation Sans", sans-serif; color: #999; rotate: 180deg; border-top: 1px solid #c8c8c8; padding-top: 2.5px; padding-left: 5px; }
.vruler .lead { height: 49px; }
.viewport { width: 1365px; display: flex; flex-direction: column; flex: none; }
.stage { height: 883px; position: relative; overflow: hidden; background: #fff; }
.hscroll { height: 17px; background: #f0f0f0; display: flex; align-items: center; padding: 0 6px 0 6px; }
.hscroll i { width: 475px; height: 13px; background: #c1c1c1; margin: 0 auto 0 408px; }
.vscroll { width: 17px; background: #f0f0f0; display: flex; flex-direction: column; align-items: center; padding-top: 6px; flex: none; }
.vscroll i { width: 13px; height: 176px; background: #c1c1c1; margin: 319px 0 auto; }
.scroll-corner { width: 17px; height: 17px; background: #dcdcdc; margin-top: 6px; }

/* artwork placed on the free canvas */
.art-header { position: absolute; left: 24px; top: 17px; width: 1304px; height: 70px; background: #e2521b; border: 1px solid #6b2a14; display: flex; align-items: flex-start; }
.people { margin: 14px 0 0 43px; }
.brand { margin: 16.5px 0 0 6px; display: flex; flex-direction: column; font-size: 13.6px; line-height: 13.2px; color: #fff; letter-spacing: .23px; }
.art-nav { margin: 31px 38px 0 auto; display: flex; gap: 44.8px; }
.home { filter: drop-shadow(0 2px 1px rgba(0,0,0,.5)); }
.art-image { position: absolute; left: 583px; top: 87px; width: 745px; height: 622px; background: #e5e5e5; }
.art-title { position: absolute; left: 0; top: 237px; width: 620px; text-align: center; white-space: pre; font-size: 32.6px; line-height: 46px; color: #000; }
.art-text { position: absolute; left: 0; top: 351px; width: 620px; text-align: center; white-space: pre; font-size: 24.4px; line-height: 34px; color: #222; }
.art-button { position: absolute; left: 185px; top: 513px; width: 250px; height: 32px; border-radius: 13px; background: #3f6fee; border: 1px solid #8b9ad0; color: #fff; font-size: 12.2px; line-height: 31px; text-align: center; }
.selection { position: absolute; left: -20px; top: 202px; width: 667px; height: 160px; border: 2px solid #4a72dc; }
.art-footer { position: absolute; left: 24px; top: 709px; width: 1304px; height: 42px; background: #c0c0c0; border-top: 1px solid #d8d8d8; border-bottom: 1px solid #d8d8d8; display: flex; align-items: center; padding: 0 0 3px 442px; color: #fff; font-size: 9.5px; white-space: nowrap; }
.art-footer svg { margin: -2px 3.5px 0 12px; }
.art-note { position: absolute; left: 24px; top: 771px; width: 1126px; height: 76px; background: linear-gradient(#fff5a5, #fff8c3 18px); box-shadow: 0 5px 6px -4px rgba(0,0,0,.25); border-radius: 2px; font: 600 11px/76px "Open Sans", sans-serif; letter-spacing: -.062px; color: #000; padding-left: 13px; white-space: nowrap; }
.zoombar, .undobar { position: absolute; top: 847px; height: 37px; background: #f9f9f9; border: 1px solid #dcdcdc; border-radius: 6px; display: flex; align-items: center; justify-content: center; }
.zoombar { left: 15px; width: 117px; gap: 19px; font: 600 11px/20px "Open Sans", sans-serif; color: #111; }
.undobar { left: 139px; width: 72px; gap: 22px; padding-right: 2px; }
.chat { position: absolute; left: 1291px; top: 853px; width: 74px; height: 30px; border: 2px solid #006de6; border-radius: 15px; background: #fff; color: #006de6; font-size: 13.7px; display: flex; align-items: center; padding-left: 14px; gap: 4px; }

/* settings */
.settings { flex: 1; background: #f4f4f4; border-left: 1px solid #cfcfcf; }
.settings div { height: 24.3px; background: #ededed; border-bottom: 1px solid #d8d8d8; padding: 0 10px 0 10px; display: flex; align-items: center; justify-content: space-between; font-size: 10px; color: #666; white-space: nowrap; }
.settings span { letter-spacing: -.2px; }
.settings em { font-style: normal; }

/* taskbar */
.taskbar { height: 40px; background: #d4e3ea; display: flex; font-family: "Open Sans", sans-serif; color: #111; flex: none; }
.start { width: 48px; display: grid; place-items: center; }
.winsearch { width: 344px; border: 1px solid #c5c9cc; background: #fff; display: flex; align-items: center; gap: 11px; padding-left: 11px; font-size: 14px; color: #333; white-space: nowrap; }
.apps { display: flex; padding-left: 2px; }
.app { width: 49px; height: 40px; display: grid; place-items: center; position: relative; }
.app.focused { background: #eef3f7; }
.app.on::after { content: ""; position: absolute; left: 4px; right: 5px; bottom: 0; height: 2px; background: #0078d7; }
.app.focused::after { left: 0; right: 0; }
.ps { width: 21px; height: 21px; border-radius: 4px; background: #001e36; color: #31a8ff; font-weight: 700; font-size: 11px; line-height: 20px; text-align: center; }
.tray { margin-left: auto; display: flex; align-items: center; font-size: 11.5px; }
.tr-vol { margin-left: 9px; }
.tr-bat { margin-left: 8px; }
.lang, .clock { display: flex; flex-direction: column; align-items: center; line-height: 18px; white-space: nowrap; }
.lang { margin-left: 10px; width: 24px; letter-spacing: -.3px; }
.clock { margin-left: 11px; width: 54px; letter-spacing: -.3px; }
.tr-note { margin: 0 20px 0 17px; }
.peek { width: 1px; height: 40px; background: #9fb0b8; margin-right: 3px; }
```
